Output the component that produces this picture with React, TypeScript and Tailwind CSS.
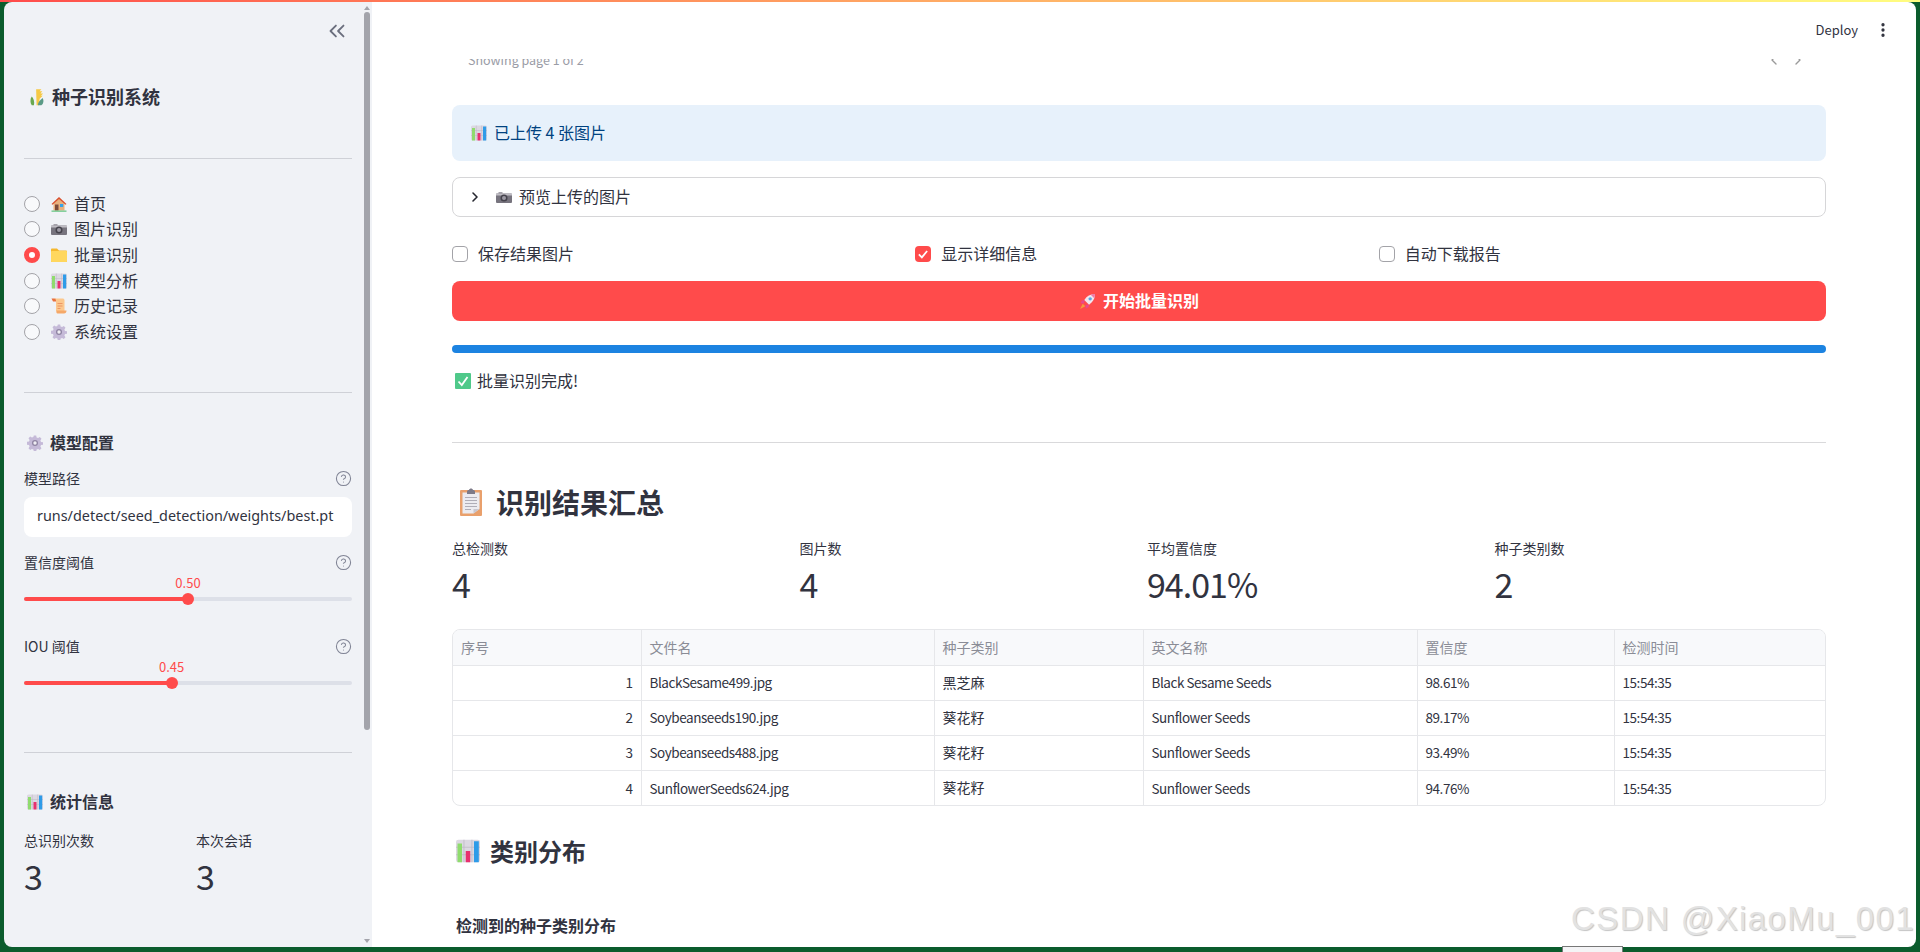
import { ChevronLeft, ChevronRight, ChevronsLeft, CircleHelp, EllipsisVertical } from "lucide-react";

const font = "font-['Noto_Sans_CJK_SC','Noto_Sans',sans-serif]";
const latinCell = "text-[13.5px] tracking-[-0.45px]";

// Emoji drawings: no emoji font in the sandbox
function Grain({ className = "" }: { className?: string }) {
  return (
    <svg viewBox="0 0 16 20" className={className}>
      <path d="M2 19.500c-2-3-2-7 0-10 2 2 3.500 6 2.500 10z" fill="#6aa84f" />
      <path d="M7 1h6l-2 2.500h3l-2 2.500h3l-2.500 2.500h2L11 12l-.5 7.500H7.500z" fill="#f6c945" />
      <path d="M9 19.500c0-3 1.500-5.500 5.500-8.500 1.500 3 1 6.500-1.500 8.500z" fill="#5a9a86" />
    </svg>
  );
}

function House({ className = "" }: { className?: string }) {
  return (
    <svg viewBox="0 0 16 16" className={className}>
      <path d="M2.500 7 8 2l5.500 5v7.500h-11z" fill="#e8b07d" />
      <path d="M0.500 8 8 1l7.500 7-1 .8L8 3 1.500 8.800z" fill="#d9502e" />
      <rect x="4" y="8.500" width="3.500" height="6" fill="#7a4a3a" />
      <rect x="9" y="8" width="3.200" height="3" fill="#36a3e8" />
      <rect x="0.500" y="14.500" width="15" height="1.300" fill="#6cc788" />
    </svg>
  );
}

function Camera({ className = "" }: { className?: string }) {
  return (
    <svg viewBox="0 0 16 16" className={className}>
      <rect x="2.500" y="3" width="4" height="2" fill="#a5a2aa" />
      <rect x="0" y="4.500" width="16" height="9.500" rx="1" fill="#77747e" />
      <rect x="0" y="4.500" width="16" height="2" fill="#c0bdc4" />
      <circle cx="8" cy="9" r="3.500" fill="#45434c" />
      <circle cx="8" cy="9" r="2" fill="#9b98a2" />
    </svg>
  );
}

function Folder({ className = "" }: { className?: string }) {
  return (
    <svg viewBox="0 0 16 16" className={className}>
      <path d="M0 2.500c0-.5.5-1 1-1h5l2 2h7c.5 0 1 .5 1 1V14c0 .5-.5 1-1 1H1c-.5 0-1-.5-1-1z" fill="#f5b82e" />
      <path d="M0 5c0-.5.5-1 1-1h14c.5 0 1 .5 1 1v9c0 .5-.5 1-1 1H1c-.5 0-1-.5-1-1z" fill="#ffd75e" />
    </svg>
  );
}

function BarChart({ className = "" }: { className?: string }) {
  return (
    <svg viewBox="0 0 16 16" className={className}>
      <rect x="0" y="0.500" width="16" height="15" rx="1.500" fill="#dcd8e2" />
      <path d="M5.300 .5v15M10.600 .5v15M0 5.500h16M0 10.500h16" stroke="#bcb8c4" strokeWidth="0.500" />
      <rect x="1" y="3" width="3" height="12.500" fill="#8fdc6e" />
      <rect x="6.500" y="8" width="3" height="7.500" fill="#e8306e" />
      <rect x="12" y="1.500" width="3.200" height="14" fill="#2e9be8" />
    </svg>
  );
}

function Scroll({ className = "" }: { className?: string }) {
  return (
    <svg viewBox="0 0 16 16" className={className}>
      <path d="M0.500 0.500h3.500c1 0 1.500 1 1.500 2V3.500H2z" fill="#e8703e" />
      <path d="M2.500 .5h9.500c1 0 1.500 1 1.500 2V13H5V3C5 1.500 4.500 .5 2.500 .5z" fill="#fcc88e" />
      <path d="M5.500 12.500h10c0 2-1 3-2.500 3H6.500C5.500 15.500 5 14 5.500 12.500z" fill="#f5a868" />
      <path d="M6.500 5.500h5M6.500 8h5M6.500 10.500h3" stroke="#e8885a" strokeWidth="0.800" />
    </svg>
  );
}

function Gear({ className = "" }: { className?: string }) {
  return (
    <svg viewBox="0 0 16 16" className={className}>
      <path
        d="M6.800.5h2.400l.4 2 1.500.6 1.700-1.100 1.700 1.700-1.100 1.700.6 1.500 2 .4v2.400l-2 .4-.6 1.500 1.100 1.700-1.700 1.700-1.700-1.100-1.500.6-.4 2H6.800l-.4-2-1.500-.6-1.700 1.100-1.700-1.700 1.100-1.700-.6-1.500-2-.4V6.800l2-.4.6-1.500L1.500 3.200l1.700-1.700 1.700 1.100 1.500-.6z"
        fill="#c5bad8"
      />
      <circle cx="8" cy="8" r="3" fill="#8f84a3" />
      <circle cx="8" cy="8" r="1.700" fill="#efedf3" />
    </svg>
  );
}

function Clipboard({ className = "" }: { className?: string }) {
  return (
    <svg viewBox="0 0 22 28" className={className}>
      <rect x="0" y="2" width="22" height="26" rx="1" fill="#e9a06c" />
      <path d="M2.500 4.500h17V21l-6 4.500h-11z" fill="#ecebf0" />
      <path d="M19.500 21l-6 4.500V21z" fill="#c9c7d0" />
      <path d="M7 3.500c0-1 1-1.500 2-1.500C9.500 0 12.500 0 13 2c1 0 2 .5 2 1.500V6H7z" fill="#7d7a88" />
      <path d="M5 9.500h12M5 12.500h12M5 15.500h12M5 18.500h12M5 21.500h6" stroke="#a8a6b0" strokeWidth="0.900" />
    </svg>
  );
}

function Rocket({ className = "" }: { className?: string }) {
  return (
    <svg viewBox="0 0 16 16" className={className}>
      <path d="M3.500 10 1 15l5-2.500z" fill="#f59a3e" />
      <path d="M5.500 6.500 2.500 7 1.500 9.500l3 .5zM9.500 10.500 9 13.500l-2.500 1-.5-3z" fill="#e84a8a" />
      <path d="M15 1c-4.500 0-7.500 2-10 5.500L9.500 11C13 8.500 15 5.500 15 1z" fill="#f2e6ee" />
      <circle cx="10.500" cy="5.500" r="1.600" fill="#5aa8e8" />
      <path d="M15 1c-1.500 0-3 .2-4 .6L14.400 5c.4-1 .6-2.500.6-4z" fill="#ef7aa8" />
    </svg>
  );
}

function CheckMark({ className = "" }: { className?: string }) {
  return (
    <svg viewBox="0 0 16 16" className={className}>
      <rect x="0" y="0" width="16" height="16" rx="1" fill="#4fc98a" />
      <path d="M3.500 8.500 6.800 12l5.700-8" fill="none" stroke="#fff" strokeWidth="1.800" />
    </svg>
  );
}

const navItems = [
  { icon: House, label: "首页" },
  { icon: Camera, label: "图片识别" },
  { icon: Folder, label: "批量识别", checked: true },
  { icon: BarChart, label: "模型分析" },
  { icon: Scroll, label: "历史记录" },
  { icon: Gear, label: "系统设置" },
];

const summary = [
  { label: "总检测数", value: "4" },
  { label: "图片数", value: "4" },
  { label: "平均置信度", value: "94.01%" },
  { label: "种子类别数", value: "2" },
];

const columns = ["序号", "文件名", "种子类别", "英文名称", "置信度", "检测时间"];

const rows = [
  ["1", "BlackSesame499.jpg", "黑芝麻", "Black Sesame Seeds", "98.61%", "15:54:35"],
  ["2", "Soybeanseeds190.jpg", "葵花籽", "Sunflower Seeds", "89.17%", "15:54:35"],
  ["3", "Soybeanseeds488.jpg", "葵花籽", "Sunflower Seeds", "93.49%", "15:54:35"],
  ["4", "SunflowerSeeds624.jpg", "葵花籽", "Sunflower Seeds", "94.76%", "15:54:35"],
];

function SliderField({ label, value, percent }: { label: string; value: string; percent: number }) {
  return (
    <div className="h-[84px]">
      <div className="flex h-[20px] items-center justify-between text-[14px]">
        <span>{label}</span>
        <CircleHelp size={17} strokeWidth={1.5} className="text-[#808495]" />
      </div>
      <div className="relative mt-[24px] h-[4px] rounded-full bg-[#dde0e8]">
        <div className="h-full rounded-full bg-[#ff4b4b]" style={{ width: `${percent}%` }} />
        <div
          className="absolute top-[-4px] h-[12px] w-[12px] -translate-x-1/2 rounded-full bg-[#ff4b4b]"
          style={{ left: `${percent}%` }}
        />
        <div
          className="absolute top-[-22px] -translate-x-1/2 text-[13px] leading-[16px] text-[#ff4b4b]"
          style={{ left: `${percent}%` }}
        >
          {value}
        </div>
      </div>
    </div>
  );
}

function Sidebar() {
  return (
    <aside className="relative flex h-full w-[368px] shrink-0 overflow-hidden rounded-l-lg bg-[#f0f2f6] pl-[20px]">
      <div className="w-[328px]">
        <div className="flex h-[56px] items-center justify-end pr-[2px] pt-[2px]">
          <ChevronsLeft size={26} strokeWidth={1.7} className="text-[#6b6f7e]" />
        </div>
        <div className="mt-[27px] flex h-[24px] items-center gap-[8px] text-[18px] font-semibold">
          <Grain className="ml-[6px] h-[18px] w-[14px]" />
          <span className="pb-[2px]">种子识别系统</span>
        </div>
        <hr className="mt-[49px] border-[#cfd1d7]" />
        <div className="mt-[32px] flex flex-col">
          {navItems.map((item) => (
            <div key={item.label} className="flex h-[25.6px] items-center text-[16px]">
              {item.checked ? (
                <span className="h-[16px] w-[16px] rounded-full border-[5px] border-[#ff4b4b] bg-white" />
              ) : (
                <span className="h-[16px] w-[16px] rounded-full border border-[#a3a3a8] bg-[#f8f9fb]" />
              )}
              <item.icon className="ml-[11px] h-[16px] w-[16px]" />
              <span className="ml-[7px] pb-[2px]">{item.label}</span>
            </div>
          ))}
        </div>
        <hr className="mt-[47px] border-[#cfd1d7]" />
        <div className="mt-[38px] flex h-[24px] items-center gap-[7px] pl-[3px] text-[16px] font-semibold">
          <Gear className="h-[16px] w-[16px]" />
          <span className="pb-[2px]">模型配置</span>
        </div>
        <div className="mt-[14px] flex h-[20px] items-center justify-between text-[14px]">
          <span>模型路径</span>
          <CircleHelp size={17} strokeWidth={1.5} className="text-[#808495]" />
        </div>
        <div className="mt-[8px] flex h-[40px] items-center rounded-lg bg-white pb-[1px] pl-[13px] font-['Noto_Sans',sans-serif] text-[14.4px]">
          runs/detect/seed_detection/weights/best.pt
        </div>
        <div className="mt-[16px]">
          <SliderField label="置信度阈值" value="0.50" percent={50} />
        </div>
        <SliderField label="IOU 阈值" value="0.45" percent={45} />
        <hr className="mt-[31px] border-[#cfd1d7]" />
        <div className="mt-[37px] flex h-[24px] items-center gap-[7px] pl-[3px] text-[16px] font-semibold">
          <BarChart className="h-[16px] w-[16px]" />
          <span className="pb-[2px]">统计信息</span>
        </div>
        <div className="mt-[16px] flex">
          <div className="w-[172px]">
            <div className="text-[14px] leading-[20px]">总识别次数</div>
            <div className="mt-[4px] text-[34px] leading-[44px]">3</div>
          </div>
          <div>
            <div className="text-[14px] leading-[20px]">本次会话</div>
            <div className="mt-[4px] text-[34px] leading-[44px]">3</div>
          </div>
        </div>
      </div>
      {/* Sidebar scrollbar */}
      <div className="absolute right-[2px] top-0 flex h-full w-[6px] flex-col items-center">
        <span className="mt-[4px] h-0 w-0 border-x-[3px] border-b-[4px] border-x-transparent border-b-[#a3a4ab]" />
        <span className="mt-[2px] h-[718px] w-[6px] rounded-full bg-[#a3a4ab]" />
        <span className="mt-auto mb-[4px] h-0 w-0 border-x-[3px] border-t-[4px] border-x-transparent border-t-[#a3a4ab]" />
      </div>
    </aside>
  );
}

function Checkbox({ label, checked }: { label: string; checked?: boolean }) {
  return (
    <div className="flex items-center text-[16px]">
      {checked ? (
        <span className="flex h-[16px] w-[16px] items-center justify-center rounded-[4px] bg-[#ff4b4b]">
          <svg viewBox="0 0 16 16" className="h-[12px] w-[12px]">
            <path d="M2.500 8.500 6.500 12.500 13.500 4" fill="none" stroke="#fff" strokeWidth="2.400" />
          </svg>
        </span>
      ) : (
        <span className="h-[16px] w-[16px] rounded-[4px] border border-[#a3a3a8]" />
      )}
      <span className="ml-[10px] pb-[2px]">{label}</span>
    </div>
  );
}

function Main() {
  return (
    <main className="relative flex h-full min-w-0 flex-1 flex-col overflow-hidden rounded-r-lg bg-white">
      <header className="flex h-[57px] shrink-0 items-center justify-end gap-[16px] pb-[2px] pr-[24px]">
        <span className="text-[13px]">Deploy</span>
        <EllipsisVertical size={18} strokeWidth={2.4} />
      </header>
      <div className="min-h-0 flex-1 overflow-hidden pl-[80px] pr-[90px]">
        {/* page is scrolled: the caption line is cut by the header */}
        <div className="mt-[-7px] flex h-[16px] items-center justify-between pl-[16px] pr-[20px] text-[12.5px] text-[#9a9ca6]">
          <span>Showing page 1 of 2</span>
          <div className="flex gap-[8px] text-[#9a9a9a]">
            <ChevronLeft size={16} />
            <ChevronRight size={16} />
          </div>
        </div>
        <div className="mt-[37px] flex h-[56px] items-center gap-[7px] rounded-lg bg-[#e7f1fb] pl-[19px] text-[16px] text-[#004280]">
          <BarChart className="h-[16px] w-[16px]" />
          <span className="pb-[3px]">已上传 4 张图片</span>
        </div>
        <div className="mt-[16px] flex h-[40px] items-center rounded-lg border border-[#d6d6d8] pl-[14px] text-[16px]">
          <ChevronRight size={16} strokeWidth={2.4} className="text-[#262730]" />
          <Camera className="ml-[13px] h-[16px] w-[16px]" />
          <span className="ml-[7px] pb-[2px]">预览上传的图片</span>
        </div>
        <div className="mt-[24px] grid h-[20px] grid-cols-3 gap-[16px]">
          <Checkbox label="保存结果图片" />
          <Checkbox label="显示详细信息" checked />
          <Checkbox label="自动下载报告" />
        </div>
        <button className="mt-[20px] flex h-[40px] w-full items-center justify-center gap-[7px] rounded-lg bg-[#ff4b4b] text-[16px] font-semibold text-white">
          <Rocket className="h-[17px] w-[17px]" />
          <span className="pb-[2px]">开始批量识别</span>
        </button>
        <div className="mt-[24px] h-[8px] rounded-full bg-[#1c83e1]" />
        <div className="mt-[18px] flex h-[20px] items-center gap-[6px] pl-[3px] text-[16px]">
          <CheckMark className="h-[16px] w-[16px]" />
          <span className="pb-[2px]">批量识别完成!</span>
        </div>
        <hr className="mt-[51px] border-[#d9d9db]" />
        <div className="mt-[41px] flex h-[36px] items-center gap-[14px] text-[28px] font-semibold">
          <Clipboard className="ml-[8px] h-[28px] w-[22px]" />
          <span>识别结果汇总</span>
        </div>
        <div className="mt-[18px] grid grid-cols-4 gap-[16px]">
          {summary.map((m) => (
            <div key={m.label}>
              <div className="text-[14px] leading-[20px]">{m.label}</div>
              <div className="mt-[2px] text-[34px] leading-[47px] tracking-[-1px]">{m.value}</div>
            </div>
          ))}
        </div>
        <div className="mt-[22px] overflow-hidden rounded-lg border border-[#e6e7ea] text-[14px]">
          <table className="w-full table-fixed border-collapse">
            <colgroup>
              <col className="w-[188px]" />
              <col className="w-[293px]" />
              <col className="w-[209px]" />
              <col className="w-[274px]" />
              <col className="w-[197px]" />
              <col />
            </colgroup>
            <thead>
              <tr className="h-[35px] bg-[#f8f9fb] text-[#8a8c96]">
                {columns.map((c, i) => (
                  <th key={c} className={`pl-[8px] text-left font-normal ${i > 0 ? "border-l border-[#e6e7ea]" : ""}`}>
                    {c}
                  </th>
                ))}
              </tr>
            </thead>
            <tbody>
              {rows.map((row) => (
                <tr key={row[0]} className="h-[35px] border-t border-[#e6e7ea]">
                  {row.map((cell, i) => (
                    <td
                      key={i}
                      className={
                        i === 0
                          ? `pr-[8px] text-right ${latinCell}`
                          : `border-l border-[#e6e7ea] pl-[8px] ${i === 2 ? "" : latinCell}`
                      }
                    >
                      {cell}
                    </td>
                  ))}
                </tr>
              ))}
            </tbody>
          </table>
        </div>
        <div className="mt-[28px] flex h-[34px] items-center gap-[10px] pl-[4px] text-[24px] font-semibold">
          <BarChart className="h-[24px] w-[24px]" />
          <span>类别分布</span>
        </div>
        <div className="mt-[46px] pl-[4px] text-[16px] font-semibold leading-[22px]">检测到的种子类别分布</div>
      </div>
      <div className="absolute bottom-[8px] right-[1px] font-['Liberation_Sans',sans-serif] text-[33px] leading-[40px] tracking-[1.4px] text-[#e2e2e2] [text-shadow:1px_1px_1px_#c4c4c4]">
        CSDN @XiaoMu_001
      </div>
    </main>
  );
}

export default function App() {
  return (
    <div className={`relative flex h-[952px] w-[1920px] flex-col overflow-hidden bg-[#0b5c2d] text-[#31333f] ${font}`}>
      <div className="h-[2px] shrink-0 bg-gradient-to-r from-[#ff4b4b] to-[#fffd80]" />
      <div className="flex min-h-0 flex-1 pb-[5px] pl-[4px] pr-[4px]">
        <Sidebar />
        <Main />
      </div>
      {/* sliver of a browser tooltip at the bottom edge */}
      <div className="absolute bottom-0 left-[1562px] h-[6px] w-[61px] border border-b-0 border-[#777] bg-[#f4f4f6]" />
    </div>
  );
}
